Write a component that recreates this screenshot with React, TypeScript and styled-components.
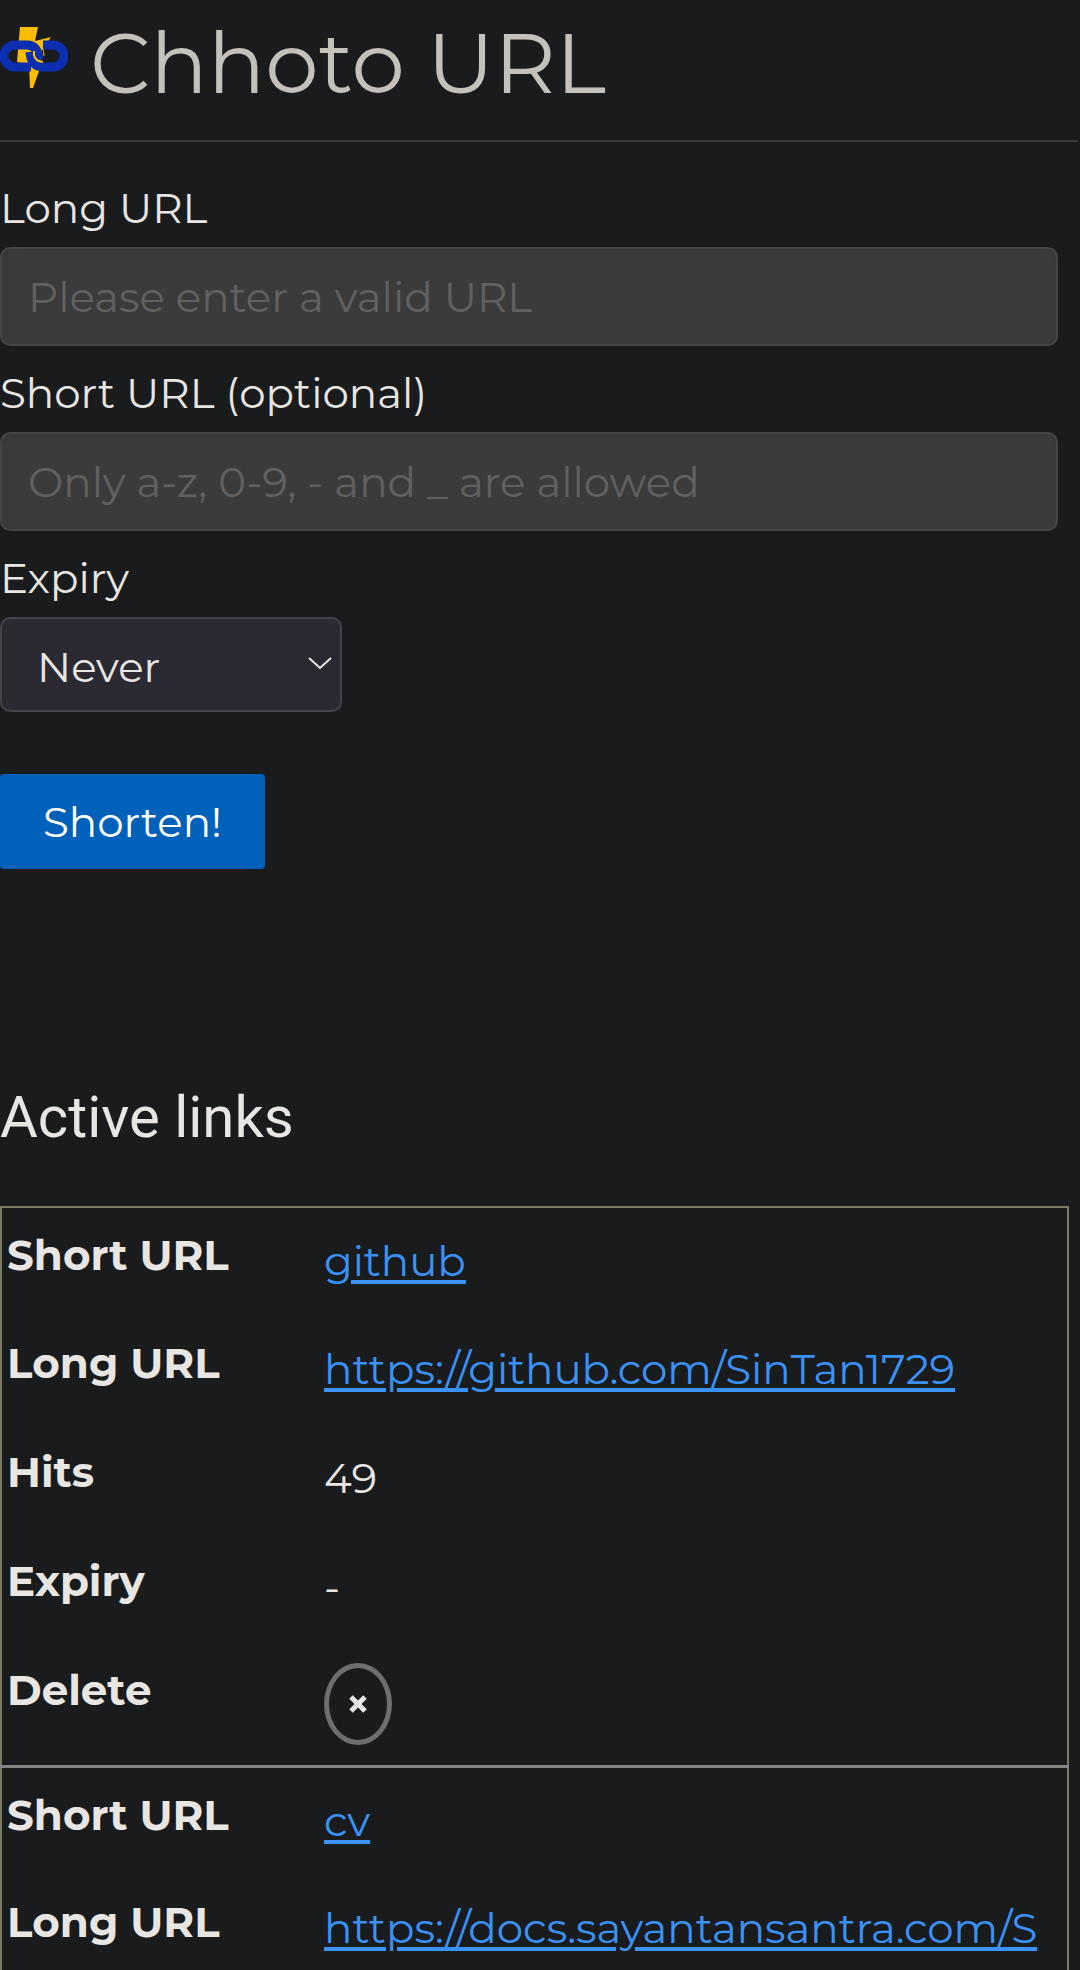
import React from "react";
import styled, { createGlobalStyle } from "styled-components";

const sans = `Montserrat, Inter, "Noto Sans", sans-serif`;

const GlobalStyle = createGlobalStyle`
  *, *::before, *::after { box-sizing: border-box; }
  body {
    margin: 0;
    background: #191b1c;
    color: #e8e6e3;
    font-family: ${sans};
    font-size: 42px;
    line-height: 50px;
  }
`;

const Page = styled.main`
  display: flex;
  flex-direction: column;
  height: 100vh;
  overflow: hidden;
`;

const Header = styled.header`
  display: flex;
  align-items: flex-start;
  gap: 22px;
  height: 142px;
  margin-right: 2px;
  padding-top: 12px;
  border-bottom: 2px solid #3a3d3f;
  flex-shrink: 0;
`;

const Logo = styled.svg`
  width: 68px;
  height: 92px;
  flex-shrink: 0;
`;

const Title = styled.h1`
  margin: 0;
  color: #c4c0ba;
  font-size: 85px;
  font-weight: 400;
  line-height: 102px;
`;

const Form = styled.form`
  display: flex;
  flex-direction: column;
  align-items: flex-start;
  padding: 41px 22px 0 0;
`;

const Field = styled.div`
  display: flex;
  flex-direction: column;
  align-items: flex-start;
  gap: 14px;
  width: 100%;
  margin-bottom: 22px;
`;

const Label = styled.label`
  line-height: 50px;
`;

const TextInput = styled.input`
  width: 100%;
  height: 99px;
  padding: 0 26px;
  border: 2px solid #434647;
  border-radius: 10px;
  background: #3b3b3b;
  box-shadow: inset 0 3px 8px #363a3a;
  color: #e8e6e3;
  font: inherit;
  &::placeholder { color: #616161; opacity: 1; }
`;

const SelectBox = styled.div`
  position: relative;
  width: 342px;
`;

const Select = styled.select`
  appearance: none;
  width: 100%;
  height: 95px;
  padding: 4px 35px 0;
  border: 2px solid #434447;
  border-radius: 10px;
  background: #2b2a33;
  color: #e8e6e3;
  font: inherit;
`;

const Chevron = styled.svg`
  position: absolute;
  right: 10px;
  top: 38px;
  width: 24px;
  height: 16px;
  pointer-events: none;
`;

const Submit = styled.button`
  width: 265px;
  height: 95px;
  margin-top: 40px;
  padding: 0;
  border: 0;
  border-radius: 4px;
  background: #0061ba;
  color: #fff;
  font: inherit;
`;

const Heading = styled.h2`
  margin: 212px 0 53px;
  font-family: Roboto, sans-serif;
  font-size: 58px;
  font-weight: 400;
  line-height: 72px;
`;

const Links = styled.table`
  width: calc(100% - 11px);
  border: 2px solid #7b7b63;
  border-bottom: 0;
  border-collapse: collapse;
  table-layout: fixed;
`;

const LinkGroup = styled.tbody`
  & + & { border-top: 3px solid #858585; }
`;

const Row = styled.tr<{ $last?: boolean }>`
  height: ${(p) => (p.$last ? 123 : 109)}px;
  vertical-align: top;
`;

const Name = styled.th`
  width: 323px;
  padding: 22px 0 0 5px;
  font-weight: 700;
  text-align: left;
`;

const Value = styled.td`
  padding: 28px 0 0;
  white-space: nowrap;
`;

const DeleteCell = styled.td`
  padding: 20px 0 0;
`;

const Link = styled.a`
  color: #3b92f6;
  text-decoration-thickness: 4px;
  text-underline-offset: 4px;
`;

const Delete = styled.button`
  display: flex;
  align-items: center;
  justify-content: center;
  width: 68px;
  height: 82px;
  padding: 0;
  border: 5px solid #6e6e6e;
  border-radius: 50%;
  background: transparent;
  color: #e8e6e3;
`;

const Cross = styled.svg`
  width: 18px;
  height: 18px;
`;

const links = [
  { short: "github", long: "https://github.com/SinTan1729", hits: 49, expiry: "-" },
  { short: "cv", long: "https://docs.sayantansantra.com/S" },
];

function ChainLogo() {
  return (
    <Logo viewBox="0 12 68 92" aria-hidden="true">
      <path d="M20 27H38L35 41L51 37L42 50L39 71L33 88H30L29 65L17 62Z" fill="#fdbd06" />
      <g fill="none" stroke="#0b2fb0" strokeWidth="9">
        <path d="M31 67H15A11 11 0 0 1 15 45H28Q38 46 39 60" />
        <path d="M43 45H53A11 11 0 0 1 53 67H42Q31 66 30 52" />
      </g>
      <path d="M34 51V55Q35 61 43 62" fill="none" stroke="#fdbd06" strokeWidth="2" />
      <path d="M37 41Q44 46 44 56" fill="none" stroke="#fdbd06" strokeWidth="1" />
    </Logo>
  );
}

export default function App() {
  return (
    <>
      <GlobalStyle />
      <Page>
        <Header>
          <ChainLogo />
          <Title>Chhoto URL</Title>
        </Header>
        <Form onSubmit={(e) => e.preventDefault()}>
          <Field>
            <Label htmlFor="long">Long URL</Label>
            <TextInput id="long" type="url" placeholder="Please enter a valid URL" />
          </Field>
          <Field>
            <Label htmlFor="short">Short URL (optional)</Label>
            <TextInput id="short" type="text" placeholder="Only a-z, 0-9, - and _ are allowed" />
          </Field>
          <Field>
            <Label htmlFor="expiry">Expiry</Label>
            <SelectBox>
              <Select id="expiry" defaultValue="never">
                <option value="never">Never</option>
              </Select>
              <Chevron viewBox="0 0 24 16" aria-hidden="true">
                <path d="M1 3L12 13L23 3" fill="none" stroke="#e8e6e3" strokeWidth="2" />
              </Chevron>
            </SelectBox>
          </Field>
          <Submit type="submit">Shorten!</Submit>
        </Form>
        <Heading>Active links</Heading>
        <Links>
          {links.map((l) => (
            <LinkGroup key={l.short}>
              <Row>
                <Name scope="row">Short URL</Name>
                <Value><Link href="#">{l.short}</Link></Value>
              </Row>
              <Row>
                <Name scope="row">Long URL</Name>
                <Value><Link href="#">{l.long}</Link></Value>
              </Row>
              {l.hits !== undefined && (
                <>
                  <Row>
                    <Name scope="row">Hits</Name>
                    <Value>{l.hits}</Value>
                  </Row>
                  <Row>
                    <Name scope="row">Expiry</Name>
                    <Value>{l.expiry}</Value>
                  </Row>
                  <Row $last>
                    <Name scope="row">Delete</Name>
                    <DeleteCell>
                      <Delete type="button" aria-label="Delete">
                        <Cross viewBox="0 0 18 18" aria-hidden="true">
                          <path d="M2 2L16 16M16 2L2 16" stroke="currentColor" strokeWidth="5" />
                        </Cross>
                      </Delete>
                    </DeleteCell>
                  </Row>
                </>
              )}
            </LinkGroup>
          ))}
        </Links>
      </Page>
    </>
  );
}
